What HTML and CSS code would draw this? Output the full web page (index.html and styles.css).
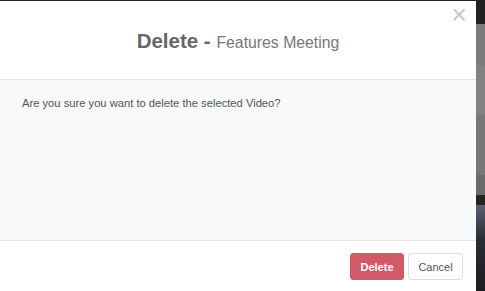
FILE: index.html
```html
<!DOCTYPE html>
<html lang="en">
<head>
    <meta charset="UTF-8">
    <meta name="viewport" content="width=device-width, initial-scale=1.0">
    <title>Delete Video</title>
    <link rel="stylesheet" href="styles.css">
</head>
<body>
    <div class="screen">
        <div class="modal">
            <div class="modal-header">
                <h2 class="modal-title"><b>Delete -</b> <span>Features Meeting</span></h2>
                <span class="close">&times;</span>
            </div>
            <div class="modal-body">
                <p>Are you sure you want to delete the selected Video?</p>
            </div>
            <div class="modal-footer">
                <button class="btn btn-danger">Delete</button>
                <button class="btn btn-default">Cancel</button>
            </div>
        </div>
        <div class="backdrop">
            <div class="bd-dark"></div>
            <div class="bd-grey1"></div>
            <div class="bd-grey2"></div>
            <div class="bd-grey3"></div>
            <div class="bd-grey4"></div>
            <div class="bd-dark2"></div>
            <div class="bd-photo"></div>
        </div>
    </div>
</body>
</html>
```

FILE: styles.css
```css
* {
    box-sizing: border-box;
}
body {
    margin: 0;
    background-color: #222;
    font-family: "Liberation Sans", Arial, sans-serif;
    overflow: hidden;
}
.screen {
    display: flex;
    height: 291px;
}
.modal {
    width: 476px;
    margin-top: 1px;
    background-color: white;
    display: flex;
    flex-direction: column;
    position: relative;
}
.modal-header {
    height: 79px;
    border-bottom: 1px solid #e5e5e5;
    display: flex;
    align-items: center;
    justify-content: center;
    padding-top: 1px;
}
.modal-title {
    margin: 0;
    color: #666;
    font-size: 20.5px;
    font-weight: normal;
}
.modal-title b {
    font-weight: bold;
}
.modal-title span {
    font-size: 15.8px;
    color: #777;
}
.close {
    position: absolute;
    top: 1px;
    right: 9px;
    font-size: 27px;
    color: #c8c8c8;
    line-height: 1;
}
.modal-body {
    height: 161px;
    background-color: #f8f9fa;
    border-bottom: 1px solid #e5e5e5;
    padding: 17px 22px;
}
.modal-body p {
    margin: 0;
    font-size: 11.2px;
    color: #555;
}
.modal-footer {
    flex: 1;
    display: flex;
    justify-content: flex-end;
    align-items: flex-start;
    gap: 4px;
    padding: 12px 13px 0 0;
}
.btn {
    height: 27px;
    border-radius: 3px;
    font-family: "Liberation Sans", Arial, sans-serif;
    font-size: 11px;
    padding: 0 5px;
}
.btn-danger {
    width: 54px;
    background-color: #d25a68;
    border: 1px solid #d25a68;
    color: white;
    font-weight: bold;
}
.btn-default {
    width: 55px;
    background-color: white;
    border: 1px solid #ddd;
    color: #555;
}
.backdrop {
    flex: 1;
    display: flex;
    flex-direction: column;
}
.bd-dark {
    height: 24px;
    background-color: #222;
}
.bd-grey1 {
    height: 41px;
    background-color: #7b7b7b;
}
.bd-grey2 {
    height: 50px;
    background-color: #828282;
}
.bd-grey3 {
    height: 60px;
    background-color: #777;
}
.bd-grey4 {
    height: 20px;
    background-color: #6a6a6a;
}
.bd-dark2 {
    height: 10px;
    background-color: #262420;
}
.bd-photo {
    flex: 1;
    background: linear-gradient(#5a6070, #2a2c34 40%, #1c1c22);
}
```
